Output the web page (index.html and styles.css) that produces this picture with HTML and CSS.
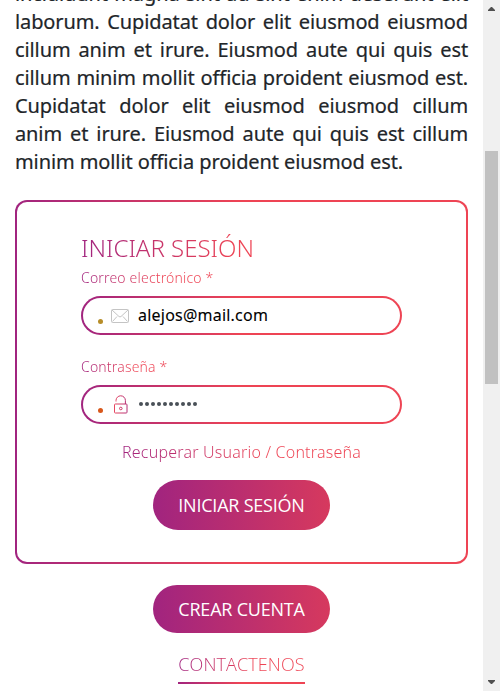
FILE: index.html
```html
<!DOCTYPE html>
<html lang="es">
<head>
<meta charset="utf-8">
<title>Iniciar sesión</title>
<link rel="stylesheet" href="styles.css">
</head>
<body>
<main class="page">
  <div class="intro">
    <p>incididunt magna sint ad sint enim deserunt elit</p>
    <p>laborum. Cupidatat dolor elit eiusmod eiusmod</p>
    <p>cillum anim et irure. Eiusmod aute qui quis est</p>
    <p>cillum minim mollit officia proident eiusmod est.</p>
    <p>Cupidatat dolor elit eiusmod eiusmod cillum</p>
    <p>anim et irure. Eiusmod aute qui quis est cillum</p>
    <p class="last">minim mollit officia proident eiusmod est.</p>
  </div>
  <section class="card">
    <h1 class="title grad-text">INICIAR SESIÓN</h1>
    <label class="label grad-text">Correo electrónico *</label>
    <div class="field">
      <span class="dot"></span>
      <svg class="icon" width="18" height="14" viewBox="0 0 18 14" fill="none" stroke="#c4c4c4"><rect x=".5" y=".5" width="17" height="13" rx="1"/><path d="M1 1l7 6.500q1 .8 2 0L17 1M1.500 12.500L6 7.500M16.500 12.500L12 7.500"/></svg>
      <span class="value">alejos@mail.com</span>
    </div>
    <label class="label second grad-text">Contraseña *</label>
    <div class="field">
      <span class="dot orange"></span>
      <svg class="icon lock" width="14" height="19" viewBox="0 0 14 19" fill="none" stroke="url(#g)"><defs><linearGradient id="g" gradientUnits="userSpaceOnUse" x1="0" y1="0" x2="14" y2="0"><stop stop-color="#e8475f"/><stop offset="1" stop-color="#b02a75"/></linearGradient></defs><path d="M2 6.500V5.500a4.700 4.700 0 0 1 9.400 0V9"/><rect x=".5" y="9" width="12.500" height="9" rx=".8"/><circle cx="6.800" cy="13.500" r="1.300"/></svg>
      <span class="value password"><i></i><i></i><i></i><i></i><i></i><i></i><i></i><i></i><i></i><i></i></span>
    </div>
    <a class="recover grad-text">Recuperar Usuario / Contraseña</a>
    <button class="btn">INICIAR SESIÓN</button>
  </section>
  <button class="btn create">CREAR CUENTA</button>
  <a class="contact"><span class="grad-text">CONTACTENOS</span></a>
</main>
<aside class="scrollbar">
  <svg width="7" height="4" viewBox="0 0 7 4" fill="#505050"><path d="M0 4V3L3 0h1l3 3v1z"/></svg>
  <div class="thumb"></div>
  <svg width="7" height="4" viewBox="0 0 7 4" fill="#505050"><path d="M0 0v1l3 3h1l3-3V0z"/></svg>
</aside>
</body>
</html>
```
FILE: styles.css
```css
* { box-sizing: border-box; }
body {
  margin: 0;
  height: 691px;
  overflow: hidden;
  display: flex;
  background: #fff;
  font-family: "Open Sans", "Noto Sans", sans-serif;
}
.page {
  width: 483px;
  padding: 0 15px;
  display: flex;
  flex-direction: column;
  align-items: center;
}
.intro {
  width: 453px;
  margin-top: -20px;
  font: 400 20px/28px "Noto Sans", sans-serif;
  letter-spacing: -.11px;
  font-variant-ligatures: none;
  -webkit-text-stroke: .2px #212529;
  color: #212529;
}
.intro p { margin: 0; white-space: nowrap; text-align-last: justify; }
.intro .last { width: 388px; }
.grad-text {
  background: linear-gradient(90deg, #a1247f, #ee4454 60%);
  -webkit-background-clip: text;
  background-clip: text;
  color: transparent;
  white-space: nowrap;
}
.card, .field {
  border: 2px solid transparent;
  background: linear-gradient(#fff, #fff) padding-box, linear-gradient(90deg, #a1247f, #ee4454 50%) border-box;
}
.card {
  width: 453px;
  height: 364px;
  margin-top: 24px;
  padding: 30px 64px 0;
  border-radius: 12px;
  display: flex;
  flex-direction: column;
  align-items: flex-start;
  flex-shrink: 0;
}
.title { margin: 0; font-family: "Noto Sans", sans-serif; font-size: 24px; line-height: 32px; font-weight: 300; }
.title.grad-text { background-image: linear-gradient(90deg, #a1247f, #ee4454 90%); }
.label { font-family: "Noto Sans", sans-serif; font-size: 14px; line-height: 20px; margin-top: 4px; font-weight: 300; letter-spacing: .18px; }
.field {
  width: 321px;
  height: 39px;
  margin-top: 8px;
  padding-left: 15px;
  border-radius: 20px;
  display: flex;
  align-items: center;
}
.label.second { margin-top: 22px; }
.dot { width: 5px; height: 5px; border-radius: 50%; background: #b78d28; margin-top: 12px; }
.dot.orange { background: #d8571b; }
.icon { margin-left: 8px; flex: none; }
.lock { margin-left: 11px; }
.value { margin: -2px 0 0 9px; font: 400 16px/24px "Noto Sans", sans-serif; letter-spacing: .22px; -webkit-text-stroke: .1px #000; color: #000; }
.password { display: flex; gap: 2px; margin: -1px 0 0 11px; }
.password i { width: 4px; height: 4px; border-radius: 50%; background: #495057; }
.recover { align-self: center; margin-top: 16px; font-family: "Noto Sans", sans-serif; font-size: 16px; line-height: 24px; font-weight: 300; letter-spacing: .2px; }
.btn {
  width: 177px;
  height: 50px;
  flex: none;
  margin: 16px 0 0;
  padding: 0;
  border: 0;
  border-radius: 25px;
  background: linear-gradient(90deg, #a1247f, #d6395e);
  color: #fff;
  font: 400 18px/27px "Open Sans", sans-serif;
  letter-spacing: -.22px;
  white-space: nowrap;
  align-self: center;
}
.create { height: 48px; margin-top: 21px; }
.contact {
  width: 127px;
  margin-top: 18px;
  height: 33px;
  font-size: 18px;
  line-height: 27px;
  font-weight: 300;
  letter-spacing: .1px;
  text-align: center;
  border-bottom: 2px solid;
  border-image: linear-gradient(90deg, #a1247f, #ee4454 50%) 1;
}
.scrollbar {
  width: 17px;
  background: #f0f0f0;
  display: flex;
  flex-direction: column;
  align-items: center;
  padding: 7px 1px 7px 0;
}
.thumb { width: 13px; height: 233px; margin: 140px 0 auto 1px; background: #c1c1c1; flex: none; }
```
